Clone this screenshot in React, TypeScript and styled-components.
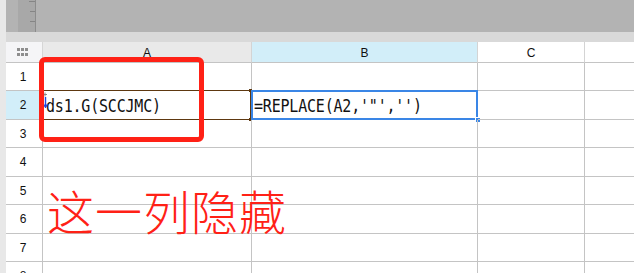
import styled, { createGlobalStyle } from "styled-components";

const GlobalStyle = createGlobalStyle`
  html, body {
    margin: 0;
    padding: 0;
    background: #ffffff;
    overflow: hidden;
  }
  body {
    font-family: "Liberation Sans", Arial, sans-serif;
  }
`;

const COLUMNS = ["A", "B", "C", ""];
const ROW_HEIGHTS = [28, 29, 28, 29, 28, 29, 28, 28];

const App = () => {
  return (
    <Page>
      <GlobalStyle />
      <LeftStrip />
      <Main>
        <TopBar>
          <Ruler>
            <svg width="18" height="32" viewBox="0 0 18 32">
              <line x1="11" y1="1.5" x2="17" y2="1.5" stroke="#858585" strokeWidth="1" />
              <line x1="12" y1="11.5" x2="17" y2="11.5" stroke="#858585" strokeWidth="1" />
              <line x1="12" y1="21.5" x2="17" y2="21.5" stroke="#858585" strokeWidth="1" />
            </svg>
          </Ruler>
        </TopBar>
        <Band />
        <Sheet $rows={ROW_HEIGHTS}>
          <Corner>
            <svg width="12" height="8" viewBox="0 0 12 8">
              {[0, 4, 8].map((x) =>
                [0, 5].map((y) => (
                  <rect key={`${x}-${y}`} x={x} y={y} width="3" height="3" fill="#8e8e8e" />
                ))
              )}
            </svg>
          </Corner>
          {COLUMNS.map((c, i) => (
            <ColHead key={c + i} $tone={c === "A" ? "gray" : c === "B" ? "blue" : "white"} $last={i === 3}>
              {c}
            </ColHead>
          ))}
          {ROW_HEIGHTS.map((_, r) => (
            <RowGroup key={r}>
              <RowHead $active={r === 1}>{r + 1}</RowHead>
              <Cell>
                {r === 1 && (
                  <>
                    <CellText $pad={3}>ds1.G(SCCJMC)</CellText>
                    <Marker>
                      <svg width="6" height="16" viewBox="0 0 6 16">
                        <line x1="0" y1="2.5" x2="4" y2="2.5" stroke="#888" strokeWidth="1" />
                        <line x1="2" y1="0.5" x2="2" y2="4.5" stroke="#888" strokeWidth="1" />
                        <line x1="2.5" y1="5" x2="2.5" y2="15" stroke="#1d49e0" strokeWidth="1.4" />
                        <path d="M0.5 12 L2.5 15.5 L4.5 12" fill="none" stroke="#1d49e0" strokeWidth="1.2" />
                      </svg>
                    </Marker>
                    <CopyFrame>
                      <Dot $pos="tl" />
                      <Dot $pos="tr" />
                      <Dot $pos="bl" />
                      <Dot $pos="br" />
                    </CopyFrame>
                  </>
                )}
              </Cell>
              <Cell>
                {r === 1 && (
                  <>
                    <CellText $pad={2}>=REPLACE(A2,'"','')</CellText>
                    <SelectFrame>
                      <Handle />
                    </SelectFrame>
                  </>
                )}
              </Cell>
              <Cell />
              <Cell $last />
            </RowGroup>
          ))}
        </Sheet>
      </Main>
      <NoteBox />
      <NoteText>这一列隐藏</NoteText>
    </Page>
  );
};

export default App;

const Page = styled.div`
  position: relative;
  display: flex;
  width: 634px;
  height: 273px;
  overflow: hidden;
  background: #ffffff;
`;

const LeftStrip = styled.div`
  width: 6px;
  flex-shrink: 0;
  background: #e8e8e8;
`;

const Main = styled.div`
  flex: 1;
  display: flex;
  flex-direction: column;
`;

const TopBar = styled.div`
  height: 32px;
  flex-shrink: 0;
  background: #b3b3b3;
  padding-left: 12px;
  display: flex;
`;

const Ruler = styled.div`
  width: 17px;
  height: 32px;
  background: #a8a8a8;
  border-right: 1px solid #8c8c8c;

  svg {
    display: block;
  }
`;

const Band = styled.div`
  height: 10px;
  flex-shrink: 0;
  background: #d9d9d9;
`;

const Sheet = styled.div<{ $rows: number[] }>`
  display: grid;
  grid-template-columns: 37px 209px 226px 107px 1fr;
  grid-template-rows: 21px ${(p) => p.$rows.map((h) => `${h}px`).join(" ")};
  font-family: "Liberation Sans", Arial, sans-serif;
`;

const Corner = styled.div`
  box-sizing: border-box;
  background: #f5f5f7;
  border-right: 1px solid #d6d6d6;
  border-bottom: 1px solid #c4c4c4;
  display: flex;
  align-items: center;
  justify-content: center;
  padding-right: 2px;
`;

const toneColor = {
  gray: "#e9e9e9",
  blue: "#d2eef9",
  white: "#ffffff",
};

const ColHead = styled.div<{ $tone: keyof typeof toneColor; $last?: boolean }>`
  box-sizing: border-box;
  background: ${(p) => toneColor[p.$tone]};
  border-right: ${(p) => (p.$last ? "none" : "1px solid #d4d4d4")};
  border-bottom: 1px solid #c4c4c4;
  display: flex;
  align-items: center;
  justify-content: center;
  font-size: 12px;
  color: #111111;
  padding-top: 1px;
`;

const RowGroup = styled.div`
  display: contents;
`;

const RowHead = styled.div<{ $active?: boolean }>`
  box-sizing: border-box;
  background: ${(p) => (p.$active ? "#d2eef9" : "#ffffff")};
  border-right: 1px solid #c4c4c4;
  border-bottom: 1px solid #c4c4c4;
  display: flex;
  align-items: center;
  justify-content: center;
  font-size: 12px;
  color: #111111;
  padding-right: 2px;
`;

const Cell = styled.div<{ $last?: boolean }>`
  position: relative;
  box-sizing: border-box;
  border-right: ${(p) => (p.$last ? "none" : "1px solid #c4c4c4")};
  border-bottom: 1px solid #c4c4c4;
  display: flex;
  align-items: center;
`;

const CellText = styled.span<{ $pad: number }>`
  padding-left: ${(p) => p.$pad}px;
  font-family: "DejaVu Sans Mono", "Liberation Mono", monospace;
  font-size: 15px;
  letter-spacing: -0.2px;
  color: #111111;
  white-space: nowrap;
  padding-top: 1px;
  transform: scaleY(1.12);
`;

const Marker = styled.div`
  position: absolute;
  left: 0px;
  top: 1px;

  svg {
    display: block;
  }
`;

const CopyFrame = styled.div`
  position: absolute;
  left: -1px;
  top: -1px;
  right: 0px;
  bottom: -1px;
  border: 1.5px solid #5e3810;
  pointer-events: none;
`;

const dotPos = {
  tl: "left: -2px; top: -2px;",
  tr: "right: -2px; top: -2px;",
  bl: "left: -2px; bottom: -2px;",
  br: "right: -2px; bottom: -2px;",
};

const Dot = styled.div<{ $pos: keyof typeof dotPos }>`
  position: absolute;
  width: 3px;
  height: 3px;
  background: #5e3810;
  ${(p) => dotPos[p.$pos]}
`;

const SelectFrame = styled.div`
  position: absolute;
  left: -1px;
  top: -1px;
  right: -1px;
  bottom: -1px;
  border: 2.5px solid #3a86e6;
  pointer-events: none;
`;

const Handle = styled.div`
  position: absolute;
  right: -5px;
  bottom: -5px;
  width: 6px;
  height: 6px;
  background: #3a86e6;
  border: 1px solid #ffffff;
  box-sizing: border-box;
`;

const NoteBox = styled.div`
  position: absolute;
  left: 39px;
  top: 57px;
  width: 165px;
  height: 85px;
  box-sizing: border-box;
  border: 5px solid #ff2116;
  border-radius: 6px;
  pointer-events: none;
`;

const NoteText = styled.div`
  position: absolute;
  left: 47px;
  top: 180px;
  font-family: "Noto Sans CJK SC", "Noto Sans", sans-serif;
  font-size: 47px;
  font-weight: 300;
  line-height: 60px;
  color: #ff2116;
  letter-spacing: 1px;
  white-space: nowrap;
`;
